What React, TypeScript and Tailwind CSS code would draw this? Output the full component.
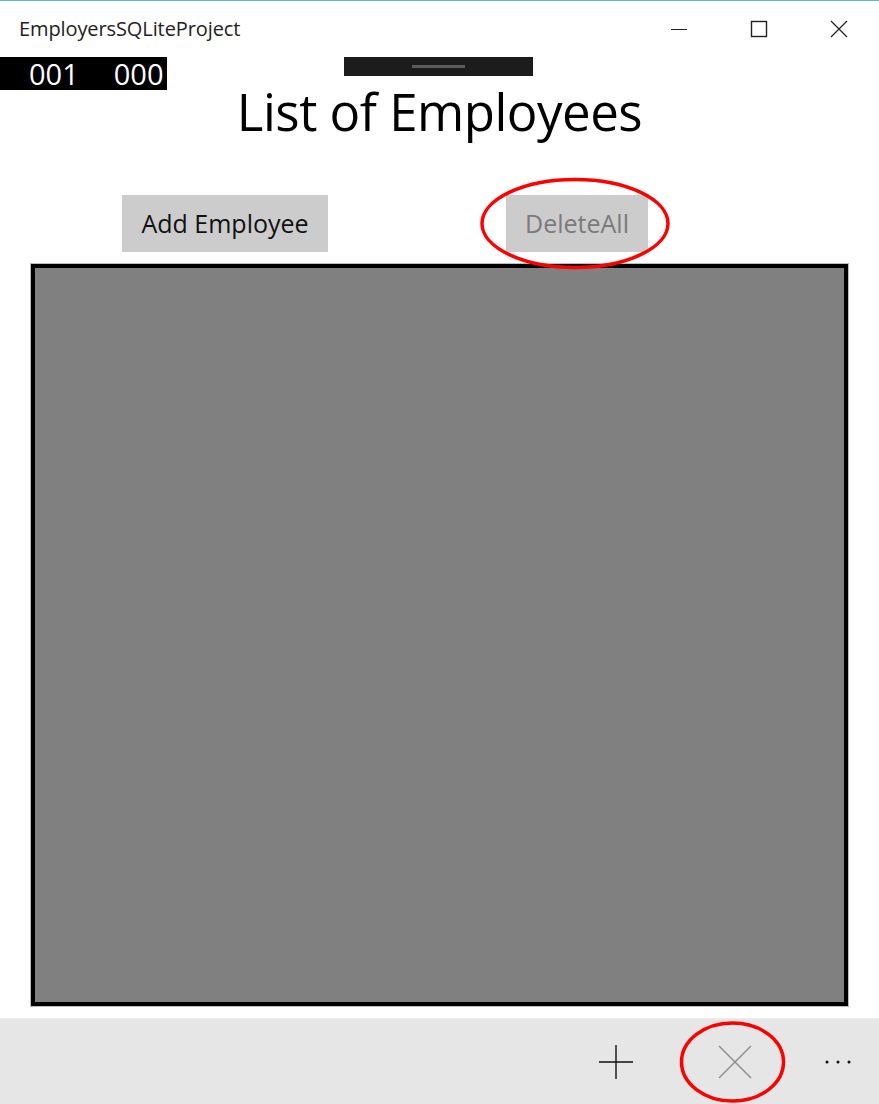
export default function App() {
  return (
    <div
      className="relative w-[879px] h-[1104px] bg-white flex flex-col overflow-hidden"
      style={{ fontFamily: '"Open Sans", "Liberation Sans", sans-serif' }}
    >
      {/* title bar */}
      <div className="h-[57px] border-t border-[#5bbcc8] flex items-center pl-[19px] pb-[1px]">
        <span className="text-[20px] text-[#222] tracking-[-0.1px]">EmployersSQLiteProject</span>
        <div className="ml-auto flex items-center h-full">
          <div className="w-[80px] flex justify-center">
            <svg width="18" height="18" viewBox="0 0 18 18">
              <line x1="1" y1="9.5" x2="17" y2="9.5" stroke="#222" strokeWidth="1" />
            </svg>
          </div>
          <div className="w-[80px] flex justify-center">
            <svg width="18" height="18" viewBox="0 0 18 18">
              <rect x="1.5" y="1.5" width="15" height="15" fill="none" stroke="#222" strokeWidth="1.4" />
            </svg>
          </div>
          <div className="w-[80px] flex justify-center">
            <svg width="18" height="18" viewBox="0 0 18 18">
              <path d="M1 1 L17 17 M17 1 L1 17" stroke="#222" strokeWidth="1.2" />
            </svg>
          </div>
        </div>
      </div>

      {/* frame counter overlay */}
      <div className="absolute left-0 top-[57px] w-[167px] h-[33px] bg-black flex items-center text-white text-[29px] leading-none">
        <span className="ml-[29px]">001</span>
        <span className="ml-[35px]">000</span>
      </div>
      <div className="absolute left-[344px] top-[57px] w-[189px] h-[19px] bg-[#1c1c1c] flex items-center justify-center">
        <div className="w-[53px] h-[3px] bg-[#5a5a5a]" />
      </div>

      {/* heading */}
      <h1 className="text-center text-[51px] leading-none text-black mt-[29px] tracking-[-0.5px]">List of Employees</h1>

      {/* buttons */}
      <div className="flex mt-[58px]">
        <button className="ml-[122px] w-[206px] h-[57px] bg-[#cccccc] text-[25px] text-[#111]">Add Employee</button>
        <button className="ml-[178px] w-[142px] h-[57px] bg-[#cccccc] text-[25px] text-[#7a7a7a]">DeleteAll</button>
      </div>

      {/* list */}
      <div className="mx-[30px] mt-[11px] h-[744px] border border-[#bdbdbd] flex">
        <div className="flex-1 border-[4px] border-black bg-[#808080]" />
      </div>

      {/* command bar */}
      <div className="mt-[11px] flex-1 bg-[#e6e6e6] border-t border-[#ececec] flex items-center justify-end">
        <div className="w-[119px] flex justify-center">
          <svg width="36" height="36" viewBox="0 0 36 36">
            <path d="M18 1 V35 M1 18 H35" stroke="#111" strokeWidth="1.4" />
          </svg>
        </div>
        <div className="w-[120px] flex justify-center">
          <svg width="36" height="36" viewBox="0 0 36 36">
            <path d="M2 2 L34 34 M34 2 L2 34" stroke="#8a8a8a" strokeWidth="1.4" />
          </svg>
        </div>
        <div className="w-[84px] flex justify-start pl-[30px]">
          <svg width="26" height="6" viewBox="0 0 26 6">
            <circle cx="2" cy="3" r="1.5" fill="#111" />
            <circle cx="13" cy="3" r="1.5" fill="#111" />
            <circle cx="24" cy="3" r="1.5" fill="#111" />
          </svg>
        </div>
      </div>

      {/* red annotation ellipses */}
      <svg className="absolute left-0 top-0 pointer-events-none" width="879" height="1104">
        <ellipse cx="575" cy="223.5" rx="93" ry="44" fill="none" stroke="#ff0000" strokeWidth="3.5" />
        <ellipse cx="732.5" cy="1062" rx="51" ry="39" fill="none" stroke="#ff0000" strokeWidth="3.5" />
      </svg>
    </div>
  );
}
